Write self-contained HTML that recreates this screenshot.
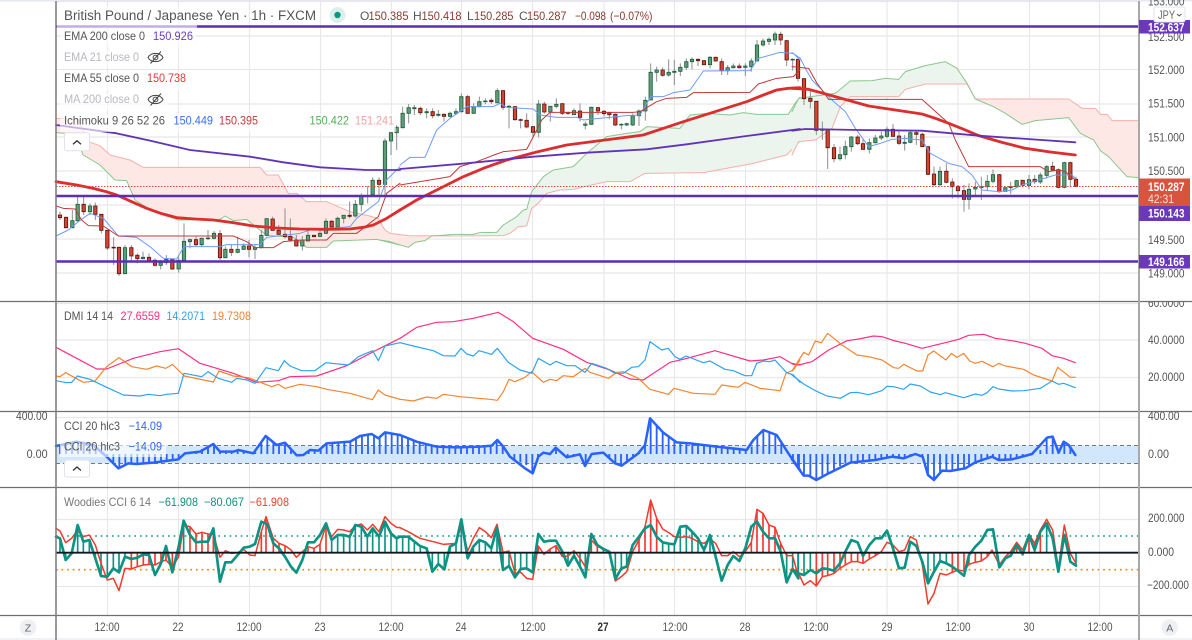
<!DOCTYPE html>
<html><head><meta charset="utf-8"><title>GBPJPY</title>
<style>
html,body{margin:0;padding:0;background:#fff;width:1192px;height:640px;overflow:hidden}
svg{display:block;position:absolute;left:0;top:0;filter:blur(.35px)}
text{font-family:"Liberation Sans",sans-serif;font-size:12px;fill:#555}
.l{fill:none;stroke-linejoin:round;stroke-linecap:round}
</style></head><body>
<svg width="1192" height="640" viewBox="0 0 1192 640" xmlns="http://www.w3.org/2000/svg">
<rect width="1192" height="640" fill="#fff"/>
<rect width="1192" height="1.5" fill="#e6e9f0"/>
<rect y="638" width="1192" height="2" fill="#f0f2f5"/>

<!-- grid -->
<path stroke="#e8e8e8" stroke-width="1.2" fill="none" d="M107.5 1V615M178.5 1V615M249.5 1V615M320.5 1V615M391.5 1V615M461.5 1V615M532.5 1V615M604 1V615M674.5 1V615M745.5 1V615M816.5 1V615M887 1V615M958 1V615M1029.5 1V615M1099.5 1V615"/>
<path stroke="#e8e8e8" stroke-width="1.2" fill="none" d="M56 1.5H1139M56 36H1139M56 69.5H1139M56 104H1139M56 137H1139M56 171H1139M56 205H1139M56 239H1139M56 273H1139M56 303.5H1139M56 340H1139M56 377.5H1139M56 417.5H1139M56 519.5H1139M56 586.5H1139"/>

<!-- cloud fills -->
<g transform="translate(0,150) scale(.33333)">
<path fill="#fde8e6" d="M168-95L235-92L265-25L300-13L330 15L390 30L430 52L780 52L800 75L835 75L865 130L890 130L920 155L980 155L1050 185L1105 197L1135 205L1150 240L1180 270L1200 272L1200 285L1130 268L1000 273L980 292L920 292L880 262L800 256L740 208L700 212L675 198L660 208L535 210L460 185L405 150L380 92L345 90L330 75L300 45L250 15L220-48L168-52Z"/>
<path class="l" stroke="#f4b0aa" stroke-width="3" d="M168-95L235-92L265-25L300-13L330 15L390 30L430 52L780 52L800 75L835 75L865 130L890 130L920 155L980 155L1050 185L1105 197L1135 205L1150 240L1180 270L1200 272"/>
<path class="l" stroke="#8cc68c" stroke-width="3" d="M168-52L220-48L250 15L300 45L330 75L345 90L380 92L405 150L460 185L535 210L660 208L675 198L700 212L740 208L800 256L880 262L920 292L980 292L1000 273L1130 268L1200 285"/>
</g>
<g transform="translate(400,0) scale(.33333)">
<path fill="#fde8e6" d="M-60 665L-45 690L-30 700L25 707L155 708L95 708L75 722L45 727L25 742L-10 732L-30 725L-60 720Z"/>
<path fill="#ebf5ed" d="M155 708L220 703L290 697L310 675L350 650L370 630L380 628L395 575L430 530L460 510L520 500L560 460L620 410L680 400L720 395L740 380L840 385L870 345L920 340L990 345L1030 338L1070 343L1165 343L1185 310L1200 292L1200 423L1160 465L1060 490L910 518L735 520L690 545L620 545L540 563L520 568L480 570L440 580L415 610L395 625L380 678L355 680L330 700L310 707Z"/>
<path class="l" stroke="#f4b0aa" stroke-width="3" d="M-60 665L-45 690L-30 700L25 707L155 708L310 707L330 700L355 680L380 678L395 625L415 610L440 580L480 570L520 568L540 563L620 545L690 545L735 520L910 518L1060 490L1160 465L1200 423"/>
<path class="l" stroke="#8cc68c" stroke-width="3" d="M-60 720L-30 725L-10 732L25 742L45 727L75 722L95 708L165 703L220 703L240 698L290 697L310 675L350 650L370 630L380 628L395 575L430 530L460 510L520 500L560 460L620 410L680 400L720 395L740 380L840 385L870 345L920 340L990 345L1030 338L1070 343L1165 343L1185 310L1200 292"/>
</g>
<g transform="translate(792,0) scale(.33333)">
<path fill="#ebf5ed" d="M0 335L20 295L70 288L130 280L175 243L240 242L280 235L320 238L340 215L400 197L460 185L495 205L525 250L550 297L525 252L400 252L340 268L320 290L175 290L145 320L120 385L70 420L20 425L0 465Z"/>
<path fill="#fde8e6" d="M550 297L830 297L870 325L910 325L925 343L945 343L960 362L1040 362L1040 533L1005 530L950 470L925 452L905 420L865 400L830 353L730 362L690 373L640 340L600 318Z"/>
<path class="l" stroke="#f4b0aa" stroke-width="3" d="M0 465L20 425L70 420L120 385L145 320L175 290L320 290L340 268L400 252L525 252L550 297L830 297L870 325L910 325L925 343L945 343L960 362L1040 362"/>
<path class="l" stroke="#8cc68c" stroke-width="3" d="M0 335L20 295L70 288L130 280L175 243L240 242L280 235L320 238L340 215L400 197L460 185L495 205L525 250L550 297L600 318L640 340L690 373L730 362L830 353L865 400L905 420L925 452L950 470L1005 530L1040 533"/>
</g>

<!-- candles -->
<g transform="translate(0,150) scale(.33333)">
<path stroke="#8f8f8f" stroke-width="3" fill="none" d="M180 185V210M198 200V235M217 180V235M233 140V215M251 140V195M270 160V195M286 158V210M304 193V250M322 240V300M341 262V345M357 290V378M375 285V372M394 285V335M412 310V340M429 305V328M447 310V335M465 325V350M482 330V358M499 315V345M517 325V360M536 320V368M552 220V335M570 265V295M588 260V290M605 262V290M624 240V270M642 243V268M660 240V330M676 290V325M694 285V318M713 260V310M731 280V300M747 270V322M765 285V327M784 240V295M800 205V258M818 200V240M836 225V255M855 175V265M871 205V273M889 255V290M907 258V302M924 240V270M960 240V262M978 205V252M995 210V232M1013 200V232M1031 195V220M1049 155V205M1066 150V202M1084 130V185M1103 108V160M1118 82V135M1137 82V135M1155-35V135M1173-55V15M1190-75V0"/>
<path fill="#5d9e79" stroke="#1f5f3d" stroke-width="2.5" d="M212 212h10V233h-10zM228 163h10V212h-10zM265 168h10V185h-10zM370 293h10V371h-10zM424 322h10V326h-10zM477 338h10V346h-10zM494 328h10V338h-10zM531 331h10V357h-10zM547 274h10V331h-10zM565 269h10V275h-10zM600 265h10V284h-10zM619 264h10V266h-10zM637 250h10V265h-10zM671 298h10V323h-10zM708 298h10V307h-10zM726 288h10V298h-10zM760 293h10V298h-10zM779 256h10V293h-10zM795 206h10V256h-10zM902 270h10V288h-10zM919 256h10V273h-10zM955 250h10V259h-10zM973 214h10V250h-10zM1008 205h10V231h-10zM1026 196h10V205h-10zM1061 163h10V198h-10zM1079 140h10V163h-10zM1113 91h10V134h-10zM1150-27h10V103h-10zM1168-52h10V-27h-10zM1185-68h10V-52h-10z"/>
<path fill="#d8442f" stroke="#571610" stroke-width="2.5" d="M175 195h10V203h-10zM193 202h10V233h-10zM246 163h10V185h-10zM281 168h10V193h-10zM299 193h10V241h-10zM317 241h10V294h-10zM336 292h10V294h-10zM352 292h10V371h-10zM389 293h10V318h-10zM407 316h10V326h-10zM442 322h10V332h-10zM460 331h10V346h-10zM512 328h10V357h-10zM583 269h10V284h-10zM655 251h10V323h-10zM689 298h10V307h-10zM742 288h10V298h-10zM813 207h10V241h-10zM831 241h10V253h-10zM850 253h10V260h-10zM866 259h10V270h-10zM884 270h10V288h-10zM937 256h10V260h-10zM990 214h10V231h-10zM1044 196h10V199h-10zM1132 91h10V103h-10z"/>
</g>
<g transform="translate(400,0) scale(.33333)">
<path stroke="#8f8f8f" stroke-width="3" fill="none" d="M8 320V385M26 312V370M43 315V345M61 320V345M80 325V355M98 325V355M115 330V350M132 340V365M150 335V352M168 325V345M184 280V338M203 285V342M221 310V342M238 290V322M256 295V312M274 295V312M292 265V310M309 270V330M327 315V385M345 318V362M362 355V385M380 340V385M399 378V412M416 300V412M433 305V340M451 320V365M469 295V325M487 310V345M504 335V345M522 325V345M540 310V365M556 365V388M574 320V375M594 320V345M612 330V350M628 335V358M646 340V378M664 370V388M680 368V378M698 340V378M717 328V378M736 290V362M752 190V300M770 200V245M788 202V230M806 178V230M823 180V255M841 190V228M859 175V210M876 172V208M894 175V198M912 180V195M930 168V205M947 170V185M965 175V225M983 195V225M1000 190V205M1018 190V205M1036 190V228M1054 175V215M1071 120V185M1089 115V140M1107 112V135M1125 95V135M1142 95V135M1160 120V198M1178 175V212"/>
<path fill="#5d9e79" stroke="#1f5f3d" stroke-width="2.5" d="M3 340h10V383h-10zM21 323h10V340h-10zM38 323h10V326h-10zM75 335h10V338h-10zM110 343h10V346h-10zM145 340h10V349h-10zM163 335h10V340h-10zM179 290h10V335h-10zM216 320h10V340h-10zM233 305h10V320h-10zM251 303h10V305h-10zM287 272h10V308h-10zM322 319h10V321h-10zM411 312h10V397h-10zM446 319h10V336h-10zM464 313h10V319h-10zM517 332h10V344h-10zM551 372h10V376h-10zM569 322h10V373h-10zM659 373h10V375h-10zM675 371h10V375h-10zM693 347h10V375h-10zM712 333h10V347h-10zM731 301h10V333h-10zM747 217h10V300h-10zM765 210h10V217h-10zM801 217h10V225h-10zM818 214h10V217h-10zM836 202h10V214h-10zM854 185h10V202h-10zM871 178h10V185h-10zM925 172h10V194h-10zM978 203h10V212h-10zM995 198h10V203h-10zM1031 198h10V202h-10zM1049 183h10V200h-10zM1066 135h10V183h-10zM1084 123h10V135h-10zM1102 118h10V124h-10zM1120 102h10V120h-10zM1173 178h10V180h-10z"/>
<path fill="#d8442f" stroke="#571610" stroke-width="2.5" d="M56 325h10V338h-10zM93 335h10V347h-10zM127 343h10V349h-10zM198 290h10V340h-10zM269 301h10V305h-10zM304 272h10V322h-10zM340 320h10V359h-10zM357 359h10V361h-10zM375 361h10V381h-10zM394 380h10V397h-10zM428 312h10V336h-10zM482 311h10V340h-10zM499 338h10V340h-10zM535 333h10V352h-10zM589 323h10V333h-10zM607 334h10V341h-10zM623 338h10V344h-10zM641 343h10V375h-10zM783 210h10V226h-10zM889 178h10V182h-10zM907 182h10V194h-10zM942 172h10V183h-10zM960 185h10V212h-10zM1013 198h10V203h-10zM1137 103h10V120h-10zM1155 122h10V180h-10z"/>
</g>
<g transform="translate(792,0) scale(.33333)">
<path stroke="#8f8f8f" stroke-width="3" fill="none" d="M18 178V245M36 235V315M55 270V325M73 304V405M91 365V420M107 390V507M126 432V487M144 440V482M160 422V478M178 408V455M197 405V435M213 415V450M232 415V460M250 405V430M268 395V420M285 380V415M303 372V410M321 395V435M338 405V452M355 390V430M373 390V435M391 398V440M408 440V525M426 500V558M444 500V558M463 490V550M481 535V595M498 555V595M516 555V635M531 550V628M550 545V590M568 530V600M586 525V570M603 508V550M622 522V578M640 560V575M656 545V582M674 540V562M692 540V560M711 525V568M728 525V552M745 518V552M764 495V535M782 485V510M799 505V565M817 485V565M835 485V558M852 530V560"/>
<path fill="#5d9e79" stroke="#1f5f3d" stroke-width="2.5" d="M86 389h10V391h-10zM139 464h10V476h-10zM155 440h10V464h-10zM173 411h10V440h-10zM227 428h10V448h-10zM245 414h10V428h-10zM263 408h10V414h-10zM280 388h10V409h-10zM333 427h10V430h-10zM350 398h10V427h-10zM439 514h10V554h-10zM526 568h10V598h-10zM545 562h10V567h-10zM563 560h10V563h-10zM581 544h10V560h-10zM598 524h10V544h-10zM635 563h10V574h-10zM651 560h10V563h-10zM669 542h10V560h-10zM706 539h10V556h-10zM740 525h10V546h-10zM759 500h10V526h-10zM812 488h10V562h-10z"/>
<path fill="#d8442f" stroke="#571610" stroke-width="2.5" d="M13 178h10V235h-10zM31 236h10V296h-10zM50 295h10V304h-10zM68 304h10V391h-10zM102 390h10V443h-10zM121 443h10V476h-10zM192 411h10V431h-10zM208 431h10V448h-10zM298 388h10V409h-10zM316 408h10V430h-10zM368 398h10V403h-10zM386 403h10V440h-10zM403 440h10V523h-10zM421 522h10V554h-10zM458 514h10V547h-10zM476 546h10V560h-10zM493 559h10V572h-10zM511 572h10V598h-10zM617 524h10V575h-10zM687 541h10V556h-10zM723 538h10V545h-10zM777 499h10V510h-10zM794 509h10V562h-10zM830 488h10V538h-10zM847 538h10V559h-10z"/>
</g>

<!-- ema & ichimoku lines -->
<g transform="translate(0,150) scale(.33333)" class="l" fill="none">
<path class="l" stroke="#6f9bf5" stroke-width="3" d="M168 258L205 240L235 215L270 190L310 205L355 258L410 262L450 290L490 325L530 327L552 290L660 290L680 284L780 284L800 262L900 250L930 240L1050 230L1070 205L1135 155L1160 90L1200 50"/>
<path class="l" stroke="#c1393a" stroke-width="3" d="M168 168L190 175L225 177L245 210L265 227L310 228L355 258L700 258L740 275L765 293L820 293L850 275L905 270L980 270L1000 250L1070 250L1135 200L1160 130L1200 100"/>
<path class="l" stroke="#db2e2e" stroke-width="8.5" d="M168 95L230 105L280 115L315 124L350 135L395 155L440 175L485 191L530 203L585 207L640 210L700 218L760 228L830 234L900 237L975 238L1050 237L1090 232L1120 225L1160 205L1200 180"/>
<path class="l" stroke="#6233b7" stroke-width="5.5" d="M168-75L350-50L450-28L570 0L750 20L850 37L960 52L1100 60L1200 60"/>
</g>
<g transform="translate(400,0) scale(.33333)">
<path class="l" stroke="#6f9bf5" stroke-width="3" d="M0 495L30 472L75 472L110 390L150 355L200 320L280 320L300 310L320 322L400 327L420 345L470 352L530 352L550 360L680 347L720 345L752 290L790 290L820 278L870 270L910 213L1050 212L1075 175L1140 157L1180 160L1200 180"/>
<path class="l" stroke="#c1393a" stroke-width="3" d="M0 555L150 530L180 500L230 485L290 462L310 455L380 448L400 410L425 360L450 337L700 337L720 335L745 320L770 305L800 295L860 292L880 278L1050 277L1075 252L1130 235L1180 230L1200 210"/>
<path class="l" stroke="#db2e2e" stroke-width="8.5" d="M0 630L50 600L120 565L190 530L255 503L320 480L410 456L500 435L615 420L730 405L790 385L850 365L945 335L1040 305L1090 285L1130 270L1165 265L1200 263"/>
<path class="l" stroke="#6233b7" stroke-width="5.5" d="M0 507L200 490L400 470L560 458L740 448L860 433L1040 408L1200 387"/>
</g>
<g transform="translate(792,0) scale(.33333)">
<path class="l" stroke="#6f9bf5" stroke-width="3" d="M0 158L25 175L40 205L60 240L90 270L125 305L160 335L190 385L230 440L265 430L300 418L340 415L390 420L415 460L470 490L510 500L540 525L570 570L620 575L660 570L690 555L740 540L790 525L840 525L850 535"/>
<path class="l" stroke="#c1393a" stroke-width="3" d="M0 200L50 205L75 250L90 270L110 298L390 298L420 325L470 370L490 420L530 500L745 500L770 515L800 510L820 515L850 540"/>
<path class="l" stroke="#db2e2e" stroke-width="8.5" d="M0 265L50 268L95 280L140 293L230 318L310 330L390 342L430 355L470 370L515 388L560 407L630 427L700 445L775 456L850 465"/>
<path class="l" stroke="#6233b7" stroke-width="5.5" d="M0 392L40 387L200 390L390 392L560 407L850 427"/>
</g>

<!-- price lines -->
<path stroke="#db4a3b" stroke-width="1" stroke-dasharray="1.5 1.5" d="M56 186.5H1139"/>
<path stroke="#5c2db5" stroke-width="2.6" d="M56 26.5H1139M56 196H1139M56 261.5H1139"/>

<!-- CCI pane -->
<rect x="56" y="445.5" width="1083" height="18" fill="#d2e6fc"/>
<path stroke="#777" stroke-width="1" stroke-dasharray="4 3" d="M56 445.5H1139M56 463.5H1139"/>
<g transform="translate(0,300) scale(.33333)">
<path stroke="#2962ff" stroke-width="5.5" fill="none" d="M180 462V436M198 462V433M216 462V428M234 462V425M251 462V427M269 462V432M287 462V435M305 462V455M322 462V473M340 462V490M358 462V505M376 462V495M394 462V490M412 462V492M430 462V491M447 462V490M465 462V488M483 462V486M500 462V484M518 462V481M536 462V477M571 462V458M589 462V456M606 462V447M624 462V436M642 462V432M660 462V455M678 462V455M695 462V455M713 462V450M731 462V454M766 462V457M784 462V425M802 462V410M820 462V428M837 462V432M855 462V428M873 462V450M926 462V452M944 462V452M962 462V445M980 462V430M997 462V428M1015 462V426M1033 462V425M1051 462V425M1068 462V413M1086 462V407M1104 462V404M1122 462V405M1139 462V413M1157 462V397M1175 462V398M1193 462V403"/>
<path class="l" stroke="#2962ff" stroke-width="7.5" d="M168 438L230 425L280 435L320 470L355 505L385 490L410 492L460 488L535 478L555 460L600 455L640 432L660 455L700 455L715 450L760 460L797 408L830 435L855 428L890 466L910 465L930 450L955 452L980 430L1050 425L1080 408L1115 402L1135 415L1155 397L1200 405"/>
</g>
<g transform="translate(400,300) scale(.33333)">
<path stroke="#2962ff" stroke-width="5.5" fill="none" d="M6 462V406M24 462V413M41 462V420M59 462V426M77 462V431M95 462V435M112 462V438M130 462V440M148 462V441M166 462V442M183 462V440M201 462V441M219 462V442M237 462V441M254 462V439M272 462V438M290 462V420M308 462V438M325 462V465M343 462V478M361 462V487M379 462V495M397 462V520M414 462V470M432 462V458M450 462V462M468 462V443M486 462V458M503 462V472M521 462V468M539 462V463M557 462V498M574 462V465M628 462V472M646 462V490M663 462V497M681 462V485M699 462V470M717 462V460M735 462V435M752 462V358M770 462V378M788 462V395M806 462V410M823 462V425M841 462V428M859 462V429M877 462V432M894 462V435M912 462V438M930 462V438M948 462V440M965 462V445M983 462V447M1001 462V448M1019 462V449M1037 462V450M1055 462V440M1072 462V405M1090 462V390M1108 462V396M1126 462V403M1144 462V425M1179 462V480M1197 462V505"/>
<path class="l" stroke="#2962ff" stroke-width="7.5" d="M0 405L50 425L110 440L170 442L240 440L275 437L292 420L310 440L330 470L375 505L398 520L415 470L430 458L450 462L467 443L500 472L540 463L555 498L575 462L610 458L645 490L665 497L715 460L735 435L750 355L790 398L830 427L870 430L950 440L1040 450L1060 420L1090 390L1130 405L1165 460L1200 510"/>
</g>
<g transform="translate(792,300) scale(.33333)">
<path stroke="#2962ff" stroke-width="5.5" fill="none" d="M18 462V505M36 462V527M55 462V528M73 462V540M91 462V527M107 462V520M126 462V510M144 462V498M160 462V490M178 462V486M197 462V485M213 462V484M232 462V483M250 462V480M268 462V476M285 462V472M303 462V471M321 462V473M338 462V475M355 462V467M391 462V468M408 462V523M426 462V540M444 462V515M463 462V510M481 462V513M498 462V508M516 462V505M531 462V495M550 462V487M568 462V485M586 462V478M603 462V470M622 462V480M640 462V480M656 462V478M674 462V474M692 462V472M711 462V468M745 462V450M764 462V413M782 462V410M799 462V455M817 462V425M835 462V437"/>
<path class="l" stroke="#2962ff" stroke-width="7.5" d="M0 478L35 527L50 527L73 540L110 520L175 488L250 480L300 470L335 475L370 462L392 470L408 525L426 540L450 512L475 513L520 505L550 487L600 470L620 480L660 478L720 462L765 413L782 410L800 458L815 425L830 435L850 465"/>
</g>

<!-- DMI pane -->
<g transform="translate(0,300) scale(.33333)" stroke-width="3.6">
<path class="l" stroke="#ff2f84" d="M168 142L230 175L290 207L320 207L400 175L480 155L535 146L600 190L700 220L770 247L835 242L870 230L950 228L1040 197L1130 150L1200 115"/>
<path class="l" stroke="#f7852f" d="M168 228L180 230L197 218L250 247L285 243L320 200L357 173L395 200L440 208L470 198L497 205L517 193L553 228L640 246L657 213L700 228L745 233L815 260L835 253L855 265L900 253L950 260L980 268L1050 280L1117 299L1135 270L1155 285L1200 298"/>
<path class="l" stroke="#2ea3f4" d="M168 242L200 248L215 247L232 228L270 238L320 262L370 285L420 288L445 283L480 287L500 283L535 280L552 220L605 230L624 215L655 235L695 247L710 235L740 240L765 250L798 203L835 212L853 182L870 198L905 212L945 212L978 188L1045 195L1075 170L1118 152L1135 182L1155 138L1200 128"/>
</g>
<g transform="translate(400,300) scale(.33333)" stroke-width="3.6">
<path class="l" stroke="#ff2f84" d="M0 115L50 82L110 67L160 65L220 55L295 37L340 65L398 115L490 148L560 187L630 210L690 237L730 240L810 187L850 178L945 152L1050 183L1090 180L1140 170L1180 193L1200 195"/>
<path class="l" stroke="#f7852f" d="M0 298L40 303L80 291L110 295L130 283L180 290L270 298L292 301L310 275L327 238L345 245L375 232L395 215L430 247L450 238L470 242L490 227L520 230L555 205L570 217L625 235L650 217L670 215L715 235L750 268L805 283L822 265L880 280L945 283L965 255L1015 262L1035 247L1080 265L1140 272L1158 220L1180 210L1200 180"/>
<path class="l" stroke="#2ea3f4" d="M0 128L40 138L100 152L130 167L165 168L183 145L200 162L220 168L237 152L275 163L292 145L325 187L360 210L395 220L415 175L450 195L468 184L500 197L525 197L555 217L575 190L620 205L645 220L670 220L695 202L715 200L735 180L750 125L785 150L805 145L825 170L840 178L858 168L910 188L930 183L975 208L1000 212L1035 227L1055 227L1070 190L1090 183L1110 185L1125 180L1160 218L1180 225L1200 247"/>
</g>
<g transform="translate(792,300) scale(.33333)" stroke-width="3.6">
<path class="l" stroke="#ff2f84" d="M0 190L20 195L60 185L110 150L165 122L200 117L245 108L270 110L310 123L340 130L390 145L460 128L500 118L530 106L575 103L610 115L660 122L700 130L750 145L780 167L815 175L850 188"/>
<path class="l" stroke="#f7852f" d="M0 213L35 157L50 165L70 123L88 128L107 100L150 135L195 165L230 170L270 180L305 203L320 205L335 193L375 213L392 213L408 165L425 153L462 180L478 160L495 172L515 160L533 183L550 190L570 184L603 200L620 190L640 198L695 208L725 225L780 243L797 202L835 232L850 232"/>
<path class="l" stroke="#2ea3f4" d="M0 225L35 252L70 272L105 288L145 295L175 278L195 277L230 284L270 272L285 259L305 260L335 268L355 252L385 258L415 276L445 284L460 278L515 293L550 282L570 286L585 278L603 260L620 267L660 273L695 272L745 265L780 243L800 253L815 250L850 263"/>
</g>

<!-- Woodies pane -->
<g fill="none">
<path stroke="#0b9483" stroke-width="1.6" stroke-dasharray="1.6 4" d="M56 536H1139"/>
<path stroke="#f57c00" stroke-width="1.6" stroke-dasharray="1.6 4" d="M56 569.7H1139"/>
</g>
<g transform="translate(0,485) scale(.33333)">
<path stroke="#0b9483" stroke-width="5" fill="none" d="M180 203V160M197 203V225M215 203V205M233 203V120M250 203V170M268 203V165M286 203V220M303 203V273M322 203V275M340 203V250M357 203V262M375 203V215M551 203V107M995 203V165M1013 203V150M1031 203V150M1049 203V155M1066 203V120M1084 203V125M1102 203V155M1118 203V130M1137 203V155M1155 203V110M1173 203V145M1190 203V160"/>
<path stroke="#f4392e" stroke-width="5" fill="none" d="M394 203V252M412 203V245M430 203V240M447 203V238M465 203V240M483 203V230M498 203V225M517 203V247M536 203V215M570 203V125M588 203V147M606 203V142M624 203V147M640 203V147M784 203V140M798 203V95M820 203V160M837 203V175M855 203V182M924 203V185M942 203V190M960 203V178M978 203V122"/>
<path class="l" stroke="#f4392e" stroke-width="4.5" d="M168 130L180 138L197 173L215 160L233 135L250 155L268 150L286 180L303 235L322 285L340 280L357 317L375 250L394 252L412 245L430 240L447 238L465 240L483 230L498 225L517 247L536 215L551 122L570 125L588 147L606 142L624 147L640 147L660 217L676 197L694 205L713 203L731 193L749 210L765 212L784 140L798 95L820 160L837 175L855 182L873 195L889 217L907 200L924 185L942 190L960 178L978 122L995 155L1013 133L1031 135L1049 140L1066 122L1084 117L1102 135L1118 118L1137 140L1155 95L1173 115L1190 127L1200 128"/>
<path class="l" stroke="#0b9483" stroke-width="8" d="M168 155L180 160L197 225L215 205L233 120L250 170L268 165L286 220L303 273L322 275L340 250L357 262L375 215L394 222L412 218L430 208L447 210L465 270L483 235L498 183L517 262L536 185L551 107L570 150L588 172L606 170L624 170L640 130L660 290L676 232L694 232L713 210L731 188L749 185L765 177L784 110L802 118L820 175L837 190L855 215L873 245L889 263L907 225L924 172L942 172L960 150L978 115L995 165L1013 150L1031 150L1049 155L1066 120L1084 125L1102 155L1118 130L1137 155L1155 110L1173 145L1190 160L1200 155"/>
</g>
<g transform="translate(400,485) scale(.33333)">
<path stroke="#0b9483" stroke-width="5" fill="none" d="M8 203V155M26 203V155M43 203V168M61 203V183M80 203V190M97 203V260M115 203V237M133 203V253M150 203V185M168 203V175M184 203V103M203 203V220M220 203V185M238 203V165M256 203V172M274 203V190M291 203V128M309 203V255M327 203V243M345 203V277M362 203V252M380 203V250M398 203V262M504 203V242M522 203V212M540 203V245M556 203V277M646 203V282M664 203V250M680 203V245M788 203V172M806 203V176M823 203V178M841 203V125M859 203V123M876 203V140M894 203V160M912 203V195M930 203V150M947 203V215M1160 203V292M1178 203V252M1195 203V280"/>
<path stroke="#f4392e" stroke-width="5" fill="none" d="M415 203V183M432 203V208M450 203V192M468 203V182M574 203V165M592 203V185M610 203V190M698 203V200M717 203V165M735 203V125M752 203V45M770 203V100M1054 203V172M1071 203V73M1089 203V85M1107 203V120M1125 203V127M1142 203V175"/>
<path class="l" stroke="#f4392e" stroke-width="4.5" d="M0 128L25 140L60 160L100 170L130 178L168 175L184 120L203 198L220 160L238 128L256 140L274 158L291 118L309 202L327 198L345 265L362 262L380 280L398 283L415 183L432 208L450 192L468 182L487 215L504 213L522 197L540 220L556 245L574 165L592 185L610 190L628 200L646 288L664 275L680 260L698 200L717 165L735 125L752 45L770 100L788 132L806 143L823 155L841 157L859 155L876 160L894 170L912 175L930 162L947 175L965 212L983 212L1000 200L1018 215L1036 200L1054 172L1071 73L1089 85L1107 120L1125 127L1142 175L1160 212L1178 212L1195 275"/>
<path class="l" stroke="#0b9483" stroke-width="8" d="M0 155L25 155L60 183L80 190L97 260L115 237L133 253L150 185L168 175L184 103L203 220L220 185L238 165L256 172L274 190L291 128L309 255L327 243L345 277L362 252L380 250L398 262L415 147L432 170L450 167L468 167L487 200L504 242L522 212L540 245L556 277L574 147L592 180L610 192L628 200L646 282L664 250L680 245L698 180L717 155L735 130L752 120L770 155L788 172L806 176L823 178L841 125L859 123L876 140L894 160L912 195L930 150L947 215L965 287L983 240L1000 213L1018 228L1036 190L1054 125L1071 110L1089 140L1107 160L1125 160L1142 200L1160 292L1178 252L1195 280"/>
</g>
<g transform="translate(792,485) scale(.33333)">
<path stroke="#0b9483" stroke-width="5" fill="none" d="M18 203V265M36 203V270M55 203V255M408 203V295M426 203V260M444 203V228M463 203V235M764 203V115M852 203V242"/>
<path stroke="#f4392e" stroke-width="5" fill="none" d="M73 203V303M91 203V275M107 203V272M126 203V265M144 203V250M160 203V240M178 203V230M197 203V230M213 203V235M232 203V222M250 203V212M481 203V262M498 203V255M516 203V258M531 203V238M550 203V232M568 203V228M586 203V215M674 203V172M711 203V148M728 203V175M745 203V135"/>
<path class="l" stroke="#f4392e" stroke-width="4.5" d="M0 250L18 262L36 300L55 287L73 303L91 275L107 272L126 265L144 250L160 240L178 230L197 230L213 235L232 222L250 212L268 200L285 172L303 180L321 200L338 195L355 155L373 165L391 240L408 357L426 325L444 265L463 270L481 262L498 255L516 258L531 238L550 232L568 228L586 215L600 195L622 240L640 215L656 200L674 172L692 195L711 148L728 175L745 135L764 103L782 135L799 250L817 120L835 205L852 235"/>
<path class="l" stroke="#0b9483" stroke-width="8" d="M0 255L18 265L36 270L55 255L73 265L91 250L107 252L126 257L144 235L160 200L178 165L197 172L213 213L232 180L250 160L268 160L285 137L303 190L321 250L338 248L355 170L373 183L391 230L408 295L426 260L444 228L463 235L481 245L498 258L516 272L531 210L550 185L568 167L586 135L603 133L622 247L640 220L656 212L674 180L692 208L711 150L728 195L745 140L764 115L782 160L799 260L817 150L835 230L852 242"/>
</g>
<path stroke="#131722" stroke-width="1.8" d="M56 552.7H1139"/>

<!-- legend fades -->
<g fill="#fff" fill-opacity=".62">
<rect x="57" y="7" width="140" height="22"/>
<rect x="60" y="30" width="136" height="17"/>
<rect x="60" y="50" width="108" height="18"/>
<rect x="60" y="72" width="130" height="18"/>
<rect x="60" y="93" width="108" height="17"/>
<rect x="60" y="114" width="336" height="18"/>
<rect x="60" y="439" width="106" height="18"/>
</g>

<!-- right axis labels -->
<text x="1148" y="5.5" textLength="36.5" lengthAdjust="spacingAndGlyphs">153.000</text>
<text x="1148" y="41" textLength="36.5" lengthAdjust="spacingAndGlyphs">152.500</text>
<text x="1148" y="74" textLength="36.5" lengthAdjust="spacingAndGlyphs">152.000</text>
<text x="1148" y="107.5" textLength="36.5" lengthAdjust="spacingAndGlyphs">151.500</text>
<text x="1148" y="141.5" textLength="36.5" lengthAdjust="spacingAndGlyphs">151.000</text>
<text x="1148" y="175" textLength="36.5" lengthAdjust="spacingAndGlyphs">150.500</text>
<text x="1148" y="244" textLength="36.5" lengthAdjust="spacingAndGlyphs">149.500</text>
<text x="1148" y="277.5" textLength="36.5" lengthAdjust="spacingAndGlyphs">149.000</text>
<text x="1148" y="307" textLength="36.5" lengthAdjust="spacingAndGlyphs">60.0000</text>
<rect x="1140" y="292" width="52" height="9.5" fill="#fff"/>
<text x="1148" y="277.5" textLength="36.5" lengthAdjust="spacingAndGlyphs" style="display:none">149.000</text>
<text x="1148" y="344" textLength="36.5" lengthAdjust="spacingAndGlyphs">40.0000</text>
<text x="1148" y="381" textLength="36.5" lengthAdjust="spacingAndGlyphs">20.0000</text>
<text x="1148" y="420" textLength="31.5" lengthAdjust="spacingAndGlyphs">400.00</text>
<text x="1148" y="458" textLength="21" lengthAdjust="spacingAndGlyphs">0.00</text>
<text x="1148" y="522" textLength="36.5" lengthAdjust="spacingAndGlyphs">200.000</text>
<text x="1148" y="556" textLength="26" lengthAdjust="spacingAndGlyphs">0.000</text>
<text x="1147" y="589" textLength="42" lengthAdjust="spacingAndGlyphs">−200.000</text>

<!-- pane borders -->
<path stroke="#6f6f6f" stroke-width="1.2" fill="none" d="M0 301.5H1192M0 411.5H1192M0 487.5H1192M0 615.5H1192"/>
<path stroke="#7a7a7a" stroke-width="1.5" d="M56 1V640"/>
<path stroke="#a8a8a8" stroke-width="2" d="M1139 1V640"/>

<!-- header legend -->
<text x="64" y="20" style="font-size:13.5px" textLength="252" lengthAdjust="spacingAndGlyphs">British Pound / Japanese Yen · 1h · FXCM</text>
<circle cx="337.5" cy="15" r="8" fill="#dcefed"/><circle cx="337.5" cy="15" r="3.2" fill="#089981"/>
<text x="360" y="20">O</text><text x="368.5" y="20" textLength="40" lengthAdjust="spacingAndGlyphs" style="fill:#8a3a30">150.385</text>
<text x="413" y="20">H</text><text x="421.5" y="20" textLength="40" lengthAdjust="spacingAndGlyphs" style="fill:#8a3a30">150.418</text>
<text x="467" y="20">L</text><text x="474" y="20" textLength="39.5" lengthAdjust="spacingAndGlyphs" style="fill:#8a3a30">150.285</text>
<text x="519" y="20">C</text><text x="527" y="20" textLength="39.5" lengthAdjust="spacingAndGlyphs" style="fill:#8a3a30">150.287</text>
<text x="575" y="20" textLength="31" lengthAdjust="spacingAndGlyphs" style="fill:#8a3a30">−0.098</text>
<text x="610" y="20" textLength="42.5" lengthAdjust="spacingAndGlyphs" style="fill:#8a3a30">(−0.07%)</text>

<text x="64" y="40" textLength="81" lengthAdjust="spacingAndGlyphs">EMA 200 close 0</text>
<text x="153" y="40" textLength="40" lengthAdjust="spacingAndGlyphs" style="fill:#6a3fc4">150.926</text>
<text x="64" y="61" textLength="75" lengthAdjust="spacingAndGlyphs" style="fill:#b8b8c0">EMA 21 close 0</text>
<g fill="none" stroke="#444" stroke-width="1"><path d="M148 57.5c3-5.5 12-5.5 15 0c-3 5.5-12 5.5-15 0z"/><circle cx="155.5" cy="57.5" r="2.4"/><path d="M150.5 63.5L161 51.5"/></g>
<text x="64" y="82" textLength="75" lengthAdjust="spacingAndGlyphs">EMA 55 close 0</text>
<text x="147" y="82" textLength="39" lengthAdjust="spacingAndGlyphs" style="fill:#e03a3a">150.738</text>
<text x="64" y="103" textLength="75" lengthAdjust="spacingAndGlyphs" style="fill:#b8b8c0">MA 200 close 0</text>
<g fill="none" stroke="#444" stroke-width="1"><path d="M148 99.5c3-5.5 12-5.5 15 0c-3 5.5-12 5.5-15 0z"/><circle cx="155.5" cy="99.5" r="2.4"/><path d="M150.5 105.5L161 93.5"/></g>
<text x="64" y="124.5" textLength="101" lengthAdjust="spacingAndGlyphs">Ichimoku 9 26 52 26</text>
<text x="173.5" y="124.5" textLength="39.5" lengthAdjust="spacingAndGlyphs" style="fill:#3a6ff0">150.449</text>
<text x="219" y="124.5" textLength="39" lengthAdjust="spacingAndGlyphs" style="fill:#c03a3a">150.395</text>
<text x="309.5" y="124.5" textLength="39.5" lengthAdjust="spacingAndGlyphs" style="fill:#55b055">150.422</text>
<text x="355" y="124.5" textLength="39" lengthAdjust="spacingAndGlyphs" style="fill:#f5a0a0">151.241</text>
<rect x="64.5" y="132.8" width="25" height="18" rx="2" fill="#fff" stroke="#e0e3eb"/>
<path d="M73 144.3l4-3.5 4 3.5" fill="none" stroke="#333" stroke-width="1.3"/>

<text x="64" y="320" textLength="49" lengthAdjust="spacingAndGlyphs">DMI 14 14</text>
<text x="120.5" y="320" textLength="39.5" lengthAdjust="spacingAndGlyphs" style="fill:#f0307f">27.6559</text>
<text x="166.5" y="320" textLength="38.5" lengthAdjust="spacingAndGlyphs" style="fill:#30a0f0">14.2071</text>
<text x="212" y="320" textLength="39" lengthAdjust="spacingAndGlyphs" style="fill:#f58030">19.7308</text>

<text x="64" y="430" textLength="56" lengthAdjust="spacingAndGlyphs">CCI 20 hlc3</text>
<text x="128.5" y="430" textLength="33.5" lengthAdjust="spacingAndGlyphs" style="fill:#3565f0">−14.09</text>
<text x="64" y="450.7" textLength="56" lengthAdjust="spacingAndGlyphs">CCI 20 hlc3</text>
<text x="128.5" y="450.7" textLength="33.5" lengthAdjust="spacingAndGlyphs" style="fill:#3565f0">−14.09</text>
<rect x="64.5" y="460" width="25" height="17" rx="2" fill="#fff" stroke="#e0e3eb"/>
<path d="M73 470.5l4-3.5 4 3.5" fill="none" stroke="#333" stroke-width="1.3"/>

<text x="64" y="506" textLength="87" lengthAdjust="spacingAndGlyphs" style="fill:#777">Woodies CCI 6 14</text>
<text x="158.5" y="506" textLength="39.5" lengthAdjust="spacingAndGlyphs" style="fill:#0f9080">−61.908</text>
<text x="204" y="506" textLength="40" lengthAdjust="spacingAndGlyphs" style="fill:#0f9080">−80.067</text>
<text x="249.5" y="506" textLength="39.5" lengthAdjust="spacingAndGlyphs" style="fill:#f04030">−61.908</text>

<!-- left axis CCI -->
<text x="16" y="420" textLength="31.5" lengthAdjust="spacingAndGlyphs">400.00</text>
<text x="26.6" y="458" textLength="21" lengthAdjust="spacingAndGlyphs">0.00</text>

<!-- price tags -->
<rect x="1139" y="20" width="51" height="13.5" fill="#6a38b9"/>
<text x="1148" y="31.5" textLength="36.5" lengthAdjust="spacingAndGlyphs" style="fill:#fff;font-weight:bold">152.637</text>
<rect x="1139" y="178.5" width="51" height="27.5" fill="#d9543f"/>
<text x="1148" y="191" textLength="36.5" lengthAdjust="spacingAndGlyphs" style="fill:#fff;font-weight:bold">150.287</text>
<text x="1148" y="203" textLength="26" lengthAdjust="spacingAndGlyphs" style="fill:#fbe3dd">42:31</text>
<rect x="1139" y="206" width="51" height="15" fill="#6a38b9"/>
<text x="1148" y="217.5" textLength="36.5" lengthAdjust="spacingAndGlyphs" style="fill:#fff;font-weight:bold">150.143</text>
<rect x="1139" y="255" width="51" height="13.5" fill="#6a38b9"/>
<text x="1148" y="266" textLength="36.5" lengthAdjust="spacingAndGlyphs" style="fill:#fff;font-weight:bold">149.166</text>

<!-- JPY button -->
<rect x="1154" y="7" width="31" height="15" rx="2" fill="#fff" stroke="#e0e3eb"/>
<text x="1158" y="19" textLength="17" lengthAdjust="spacingAndGlyphs" style="fill:#666">JPY</text>
<path d="M1177 14l2.2 2 2.2-2" fill="none" stroke="#555" stroke-width="1"/>

<!-- time axis -->
<g text-anchor="middle">
<text x="107" y="631" textLength="25" lengthAdjust="spacingAndGlyphs">12:00</text>
<text x="178" y="631" textLength="11" lengthAdjust="spacingAndGlyphs">22</text>
<text x="249" y="631" textLength="25" lengthAdjust="spacingAndGlyphs">12:00</text>
<text x="320" y="631" textLength="11" lengthAdjust="spacingAndGlyphs">23</text>
<text x="391" y="631" textLength="25" lengthAdjust="spacingAndGlyphs">12:00</text>
<text x="461" y="631" textLength="11" lengthAdjust="spacingAndGlyphs">24</text>
<text x="533" y="631" textLength="25" lengthAdjust="spacingAndGlyphs">12:00</text>
<text x="603" y="631" textLength="11" lengthAdjust="spacingAndGlyphs" style="fill:#333;font-weight:bold">27</text>
<text x="675" y="631" textLength="25" lengthAdjust="spacingAndGlyphs">12:00</text>
<text x="745" y="631" textLength="11" lengthAdjust="spacingAndGlyphs">28</text>
<text x="816" y="631" textLength="25" lengthAdjust="spacingAndGlyphs">12:00</text>
<text x="887" y="631" textLength="11" lengthAdjust="spacingAndGlyphs">29</text>
<text x="958" y="631" textLength="25" lengthAdjust="spacingAndGlyphs">12:00</text>
<text x="1029" y="631" textLength="11" lengthAdjust="spacingAndGlyphs">30</text>
<text x="1100" y="631" textLength="25" lengthAdjust="spacingAndGlyphs">12:00</text>
</g>
<circle cx="28" cy="627.5" r="8.3" fill="#eef0f4"/>
<text x="28" y="631.5" text-anchor="middle" style="font-size:10.5px;fill:#666">Z</text>
<circle cx="1169.7" cy="627.5" r="8.3" fill="#eef0f4"/>
<text x="1169.7" y="631.5" text-anchor="middle" style="font-size:10.5px;fill:#666">A</text>
</svg>
</body></html>
